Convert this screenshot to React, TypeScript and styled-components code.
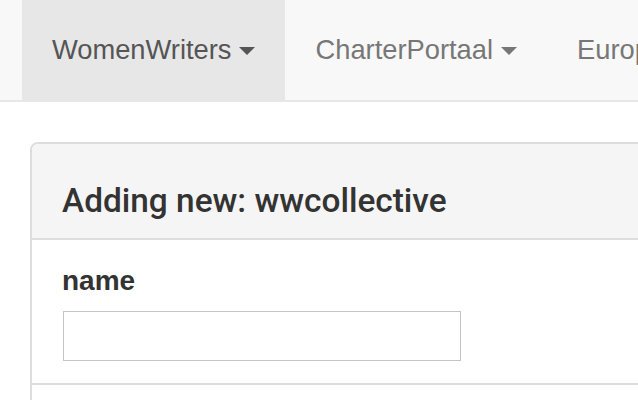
import React from "react";
import styled, { createGlobalStyle } from "styled-components";

const GlobalStyle = createGlobalStyle`
  html, body {
    margin: 0;
    padding: 0;
    background: #ffffff;
    overflow: hidden;
  }
  body {
    font-family: "Liberation Sans", Arial, Helvetica, sans-serif;
    color: #333333;
  }
  * { box-sizing: border-box; }
`;

const Page = styled.div`
  width: 638px;
  height: 400px;
  overflow: hidden;
`;

const Navbar = styled.nav`
  height: 102px;
  background: #f8f8f8;
  border-bottom: 2px solid #e7e7e7;
  display: flex;
  padding-left: 22px;
  margin-bottom: 40px;
  white-space: nowrap;
`;

const NavItem = styled.a<{ $active?: boolean }>`
  display: flex;
  align-items: center;
  height: 100px;
  padding: 0 30px;
  font-size: 27.3px;
  line-height: 40px;
  color: ${(p) => (p.$active ? "#555555" : "#777777")};
  background: ${(p) => (p.$active ? "#e7e7e7" : "transparent")};
  text-decoration: none;
  flex-shrink: 0;
`;

const Caret = styled.span`
  display: inline-block;
  width: 0;
  height: 0;
  margin-left: 8px;
  margin-top: 2px;
  border-top: 8px solid currentColor;
  border-left: 8px solid transparent;
  border-right: 8px solid transparent;
`;

const Panel = styled.section`
  margin-left: 30px;
  width: 760px;
  border: 2px solid #dddddd;
  border-radius: 8px;
  background: #ffffff;
`;

const PanelHeading = styled.header`
  background: #f5f5f5;
  border-bottom: 2px solid #dddddd;
  border-radius: 6px 6px 0 0;
  padding: 37px 30px 17px;
`;

const PanelTitle = styled.h3`
  margin: 0;
  font-family: Roboto, "Liberation Sans", Arial, sans-serif;
  font-weight: 500;
  font-size: 33.4px;
  line-height: 40px;
  color: #333333;
`;

const PanelBody = styled.div`
  padding: 25px 30px 22px;
  border-bottom: 2px solid #dddddd;
`;

const FieldLabel = styled.label`
  display: block;
  font-weight: 700;
  font-size: 28px;
  line-height: 32px;
  color: #333333;
  margin-bottom: 14px;
`;

const TextInput = styled.input`
  display: block;
  width: 398px;
  height: 50px;
  margin-left: 1px;
  border: 1px solid #c4c4c4;
  border-radius: 0;
  background: #ffffff;
  padding: 0 8px;
  font-size: 24px;
  outline: none;
`;

const PanelRest = styled.div`
  height: 60px;
`;

export default function App() {
  return (
    <Page>
      <GlobalStyle />
      <Navbar>
        <NavItem $active>
          WomenWriters
          <Caret />
        </NavItem>
        <NavItem>
          CharterPortaal
          <Caret />
        </NavItem>
        <NavItem>
          EuropeanaSounds
          <Caret />
        </NavItem>
      </Navbar>
      <Panel>
        <PanelHeading>
          <PanelTitle>Adding new: wwcollective</PanelTitle>
        </PanelHeading>
        <PanelBody>
          <FieldLabel>name</FieldLabel>
          <TextInput type="text" />
        </PanelBody>
        <PanelRest />
      </Panel>
    </Page>
  );
}
